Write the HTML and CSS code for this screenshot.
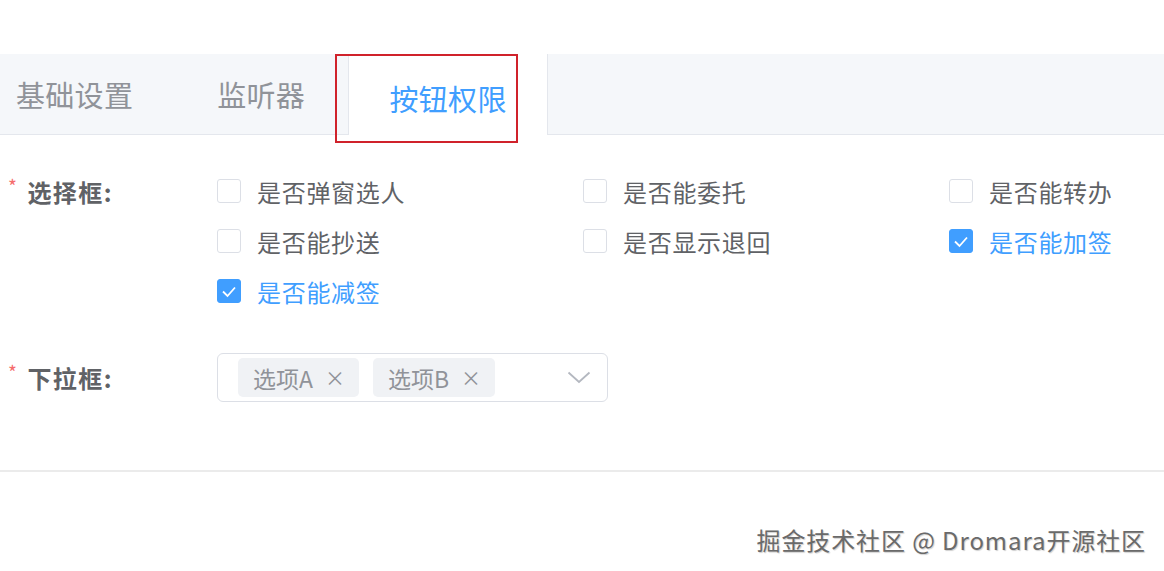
FILE: index.html
```html
<!DOCTYPE html>
<html lang="zh">
<head>
<meta charset="utf-8">
<title>按钮权限</title>
<link rel="stylesheet" href="styles.css">
</head>
<body>
<div class="page">
  <div class="top-space"></div>
  <div class="tabs">
    <div class="tab tab-first">基础设置</div>
    <div class="tab">监听器</div>
    <div class="tab active">按钮权限</div>
    <div class="annot"></div>
  </div>

  <div class="form">
    <div class="form-item">
      <label class="label"><span class="req">*</span>选择框:</label>
      <div class="check-grid">
        <div class="check"><span class="box"></span><span class="ctext">是否弹窗选人</span></div>
        <div class="check"><span class="box"></span><span class="ctext">是否能委托</span></div>
        <div class="check"><span class="box"></span><span class="ctext">是否能转办</span></div>
        <div class="check"><span class="box"></span><span class="ctext">是否能抄送</span></div>
        <div class="check"><span class="box"></span><span class="ctext">是否显示退回</span></div>
        <div class="check checked"><span class="box"><svg viewBox="0 0 24 24" width="24" height="24"><polyline points="6,12.5 10.5,17 18,8.5" fill="none" stroke="#fff" stroke-width="1.8"/></svg></span><span class="ctext">是否能加签</span></div>
        <div class="check checked"><span class="box"><svg viewBox="0 0 24 24" width="24" height="24"><polyline points="6,12.5 10.5,17 18,8.5" fill="none" stroke="#fff" stroke-width="1.8"/></svg></span><span class="ctext">是否能减签</span></div>
      </div>
    </div>

    <div class="form-item select-item">
      <label class="label"><span class="req">*</span>下拉框:</label>
      <div class="select">
        <span class="tag">选项A<span class="close">×</span></span>
        <span class="tag">选项B<span class="close">×</span></span>
        <svg class="arrow" viewBox="0 0 24 13" width="24" height="13"><polyline points="1.5,1.5 12,11 22.5,1.5" fill="none" stroke="#b4b8c0" stroke-width="1.8"/></svg>
      </div>
    </div>
  </div>

  <div class="divider"></div>

  <div class="footer">
    <span class="mark">掘金技术社区 @ Dromara开源社区</span>
  </div>
</div>
</body>
</html>
```

FILE: styles.css
```css
* { box-sizing: border-box; }
html, body { margin: 0; padding: 0; background: #fff; }
body {
  font-family: "Noto Sans CJK SC", "Noto Sans", sans-serif;
  color: #606266;
  width: 1164px;
  height: 571px;
  overflow: hidden;
}
.top-space { height: 54px; }

.tabs {
  position: relative;
  display: flex;
  height: 81px;
  background: #f5f7fa;
  border-bottom: 1px solid #e4e7ed;
}
.tab {
  height: 80px;
  display: flex;
  align-items: center;
  padding: 0 42px;
  font-size: 29px;
  color: #909399;
  line-height: 1;
  letter-spacing: 0.3px;
}
.tab-first { padding-left: 16px; padding-right: 42px; }
.tab.active {
  width: 200px;
  justify-content: center;
  padding: 8px 0 0 0;
  height: 81px;
  background: #fff;
  color: #409eff;
  border-left: 1px solid #e4e7ed;
  border-right: 1px solid #e4e7ed;
  margin-left: 1px;
}
.annot {
  position: absolute;
  left: 335px;
  top: 0;
  width: 183px;
  height: 89px;
  border: 2px solid #d0222b;
  pointer-events: none;
}

.form { padding-top: 31px; }
.form-item { display: flex; align-items: flex-start; }
.label {
  width: 217px;
  height: 50px;
  display: flex;
  align-items: center;
  padding-left: 8px;
  font-size: 24px;
  font-weight: bold;
  color: #606266;
  letter-spacing: 1.5px;
}
.req {
  color: #f56c6c;
  font-size: 19px;
  font-weight: normal;
  margin-right: 9px;
  align-self: center;
  margin-top: -12px;
}

.check-grid {
  display: grid;
  grid-template-columns: 366px 366px 215px;
  grid-auto-rows: 50px;
}
.check {
  display: flex;
  align-items: center;
  gap: 16px;
  font-size: 24px;
  color: #606266;
  letter-spacing: 0.7px;
}
.box {
  width: 24px;
  height: 24px;
  border: 1px solid #dcdfe6;
  border-radius: 3px;
  background: #fff;
  display: flex;
  align-items: center;
  justify-content: center;
}
.box svg { display: block; flex: none; }
.check.checked .box { background: #409eff; border-color: #409eff; }
.check.checked .ctext { color: #409eff; }

.select-item { margin-top: 37px; }
.select-item .label { height: 49px; }
.select {
  position: relative;
  width: 391px;
  height: 49px;
  border: 1.5px solid #dcdfe6;
  border-radius: 6px;
  display: flex;
  align-items: center;
  gap: 14px;
  padding-left: 20px;
}
.tag {
  height: 39px;
  display: inline-flex;
  align-items: center;
  padding: 0 14px 0 15px;
  background: #f0f2f5;
  border-radius: 5px;
  font-size: 23px;
  color: #909399;
}
.close {
  margin-left: 12px;
  font-size: 20px;
  color: #909399;
}
.arrow {
  position: absolute;
  right: 16px;
  top: 17px;
}

.divider {
  margin-top: 68px;
  height: 2px;
  background: #ebebeb;
}

.footer {
  display: flex;
  justify-content: flex-end;
  padding-top: 50px;
  padding-right: 18px;
}
.mark {
  font-size: 24px;
  color: #6a6a6a;
  text-shadow: 1px 1px 1px #cfcfcf;
  letter-spacing: 0.9px;
}
```
